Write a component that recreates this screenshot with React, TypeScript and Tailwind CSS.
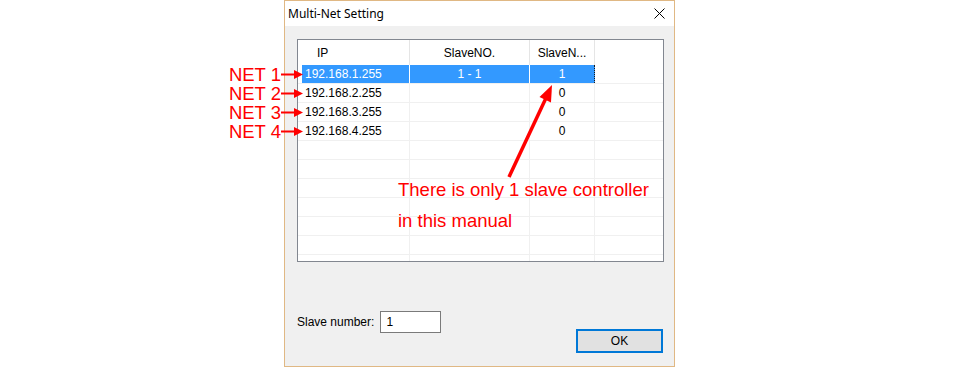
import React from "react";

const rows = [
  { ip: "192.168.1.255", no: "1 - 1", n: "1", sel: true },
  { ip: "192.168.2.255", no: "", n: "0" },
  { ip: "192.168.3.255", no: "", n: "0" },
  { ip: "192.168.4.255", no: "", n: "0" },
  { ip: "", no: "", n: "" },
  { ip: "", no: "", n: "" },
  { ip: "", no: "", n: "" },
  { ip: "", no: "", n: "" },
  { ip: "", no: "", n: "" },
  { ip: "", no: "", n: "" },
  { ip: "", no: "", n: "" },
];

export default function App() {
  return (
    <div className="relative w-[960px] h-[368px] overflow-hidden bg-white" style={{ fontFamily: '"Liberation Sans", Arial, sans-serif' }}>
      <div className="ml-[284px] w-[391px] h-[367px] border border-[#e0b884] bg-[#f0f0f0] flex flex-col">
        {/* Title bar */}
        <div className="h-[25px] bg-white flex items-center justify-between pl-[3px] pr-[9px] shrink-0">
          <span className="text-[12px] text-black" style={{ fontFamily: '"Noto Sans", "Open Sans", sans-serif' }}>Multi-Net Setting</span>
          <svg width="11" height="11" viewBox="0 0 11 11">
            <path d="M0.5 0.5 L10.5 10.5 M10.5 0.5 L0.5 10.5" stroke="#000" strokeWidth="1" />
          </svg>
        </div>
        {/* Content */}
        <div className="flex flex-col pl-[12px] pr-[11px] pt-[13px]">
          <div className="w-[367px] h-[223px] border border-[#828790] bg-white overflow-hidden text-[12px] text-black">
            {/* Header */}
            <div className="flex h-[25px]">
              <div className="w-[112px] border-r border-[#e5e5e5] flex items-center pl-[19px]">IP</div>
              <div className="w-[120px] border-r border-[#e5e5e5] flex items-center justify-center">SlaveNO.</div>
              <div className="w-[65px] border-r border-[#e5e5e5] flex items-center justify-center">SlaveN...</div>
              <div className="flex-1" />
            </div>
            {rows.map((r, i) => (
              <div key={i} className="flex h-[19px] border-b border-[#f0f0f0]">
                <div className={"w-[112px] border-r flex items-center " + (r.sel ? "border-white" : "border-[#f0f0f0]")}>
                  <div className={"ml-[4px] h-full flex-1 flex items-center pl-[3px] " + (r.sel ? "bg-[#3399ff] text-white" : "")}>{r.ip}</div>
                </div>
                <div className={"w-[120px] border-r flex items-center justify-center " + (r.sel ? "bg-[#3399ff] text-white border-white" : "border-[#f0f0f0]")}>{r.no}</div>
                <div className={"w-[65px] border-r flex items-center justify-center " + (r.sel ? "bg-[#3399ff] text-white border-dotted border-[#1a1a1a]" : "border-[#f0f0f0]")}>{r.n}</div>
                <div className="flex-1" />
              </div>
            ))}
          </div>
          {/* Bottom controls */}
          <div className="flex justify-between items-start mt-[49px]">
            <div className="flex items-center h-[22px] text-[12px] text-black">
              <span>Slave number:</span>
              <div className="ml-[6px] w-[61px] h-[22px] border border-[#7a7a7a] bg-white flex items-center pl-[5px]">1</div>
            </div>
            <button className="mt-[18px] w-[87px] h-[24px] border-2 border-[#0078d7] bg-[#e1e1e1] text-[12px] text-black flex items-center justify-center">
              OK
            </button>
          </div>
        </div>
      </div>

      {/* Annotations */}
      {["NET 1", "NET 2", "NET 3", "NET 4"].map((t, i) => (
        <div
          key={t}
          className="absolute w-[80px] text-right text-[18.5px] leading-[18px] text-[#ff0000]"
          style={{ left: 201, top: 66 + i * 19 }}
        >
          {t}
        </div>
      ))}
      <div className="absolute left-[398px] top-[181px] text-[18.5px] leading-[18px] text-[#ff0000] whitespace-nowrap">There is only 1 slave controller</div>
      <div className="absolute left-[398px] top-[212px] text-[18.5px] leading-[18px] text-[#ff0000] whitespace-nowrap">in this manual</div>
      <svg className="absolute left-0 top-0 pointer-events-none" width="960" height="368">
        {[0, 1, 2, 3].map((i) => {
          const y = 74.5 + i * 19;
          return (
            <g key={i}>
              <line x1="281" y1={y} x2="296" y2={y} stroke="#ff0000" strokeWidth="2" />
              <polygon points={`303,${y} 294,${y - 4.5} 294,${y + 4.5}`} fill="#ff0000" />
            </g>
          );
        })}
        <line x1="509" y1="177" x2="546" y2="98" stroke="#ff0000" strokeWidth="3.5" />
        <polygon points="552,85 539.5,97 551,102.5" fill="#ff0000" />
      </svg>
    </div>
  );
}
